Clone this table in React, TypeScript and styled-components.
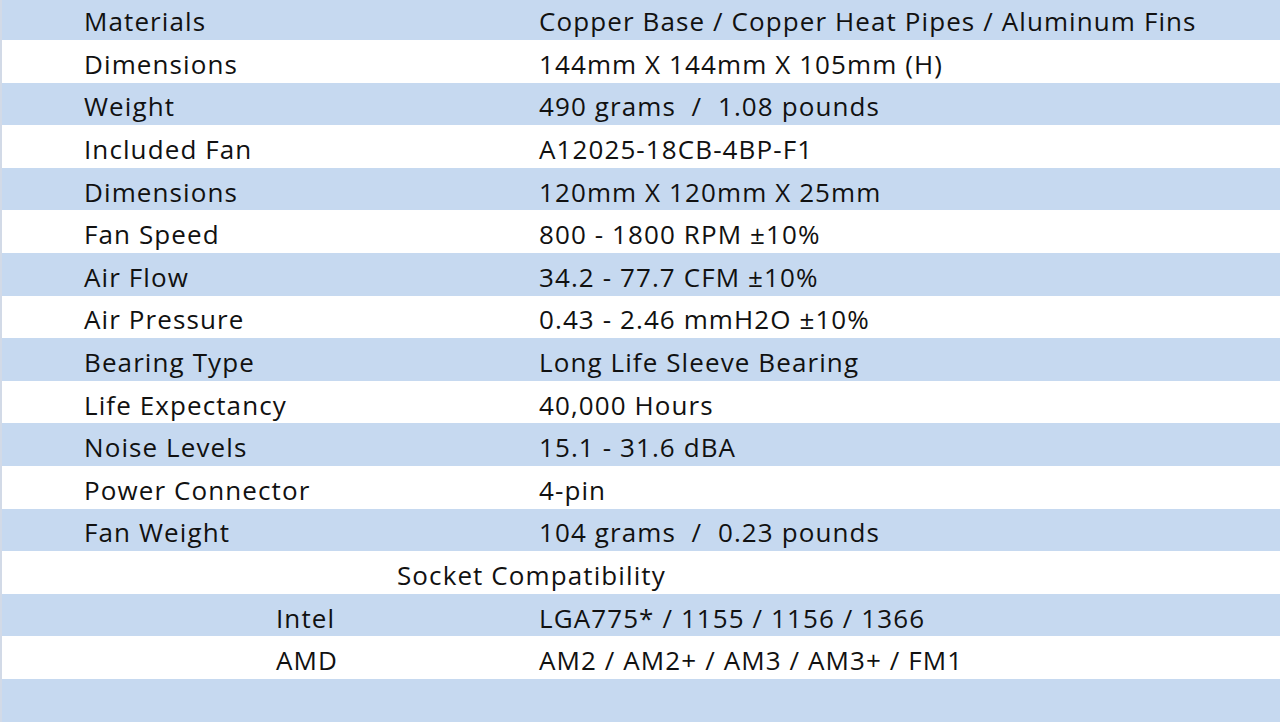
import styled, { createGlobalStyle } from 'styled-components';

const GlobalStyle = createGlobalStyle`
  html, body {
    margin: 0;
    padding: 0;
    background: #c6d9f0;
    overflow: hidden;
  }
`;

type Spec = { label: string; value: string };

const specs: Spec[] = [
  { label: 'Materials', value: 'Copper Base / Copper Heat Pipes / Aluminum Fins' },
  { label: 'Dimensions', value: '144mm X 144mm X 105mm (H)' },
  { label: 'Weight', value: '490 grams  /  1.08 pounds' },
  { label: 'Included Fan', value: 'A12025-18CB-4BP-F1' },
  { label: 'Dimensions', value: '120mm X 120mm X 25mm' },
  { label: 'Fan Speed', value: '800 - 1800 RPM ±10%' },
  { label: 'Air Flow', value: '34.2 - 77.7 CFM ±10%' },
  { label: 'Air Pressure', value: '0.43 - 2.46 mmH2O ±10%' },
  { label: 'Bearing Type', value: 'Long Life Sleeve Bearing' },
  { label: 'Life Expectancy', value: '40,000 Hours' },
  { label: 'Noise Levels', value: '15.1 - 31.6 dBA' },
  { label: 'Power Connector', value: '4-pin' },
  { label: 'Fan Weight', value: '104 grams  /  0.23 pounds' },
];

const sockets: Spec[] = [
  { label: 'Intel', value: 'LGA775* / 1155 / 1156 / 1366' },
  { label: 'AMD', value: 'AM2 / AM2+ / AM3 / AM3+ / FM1' },
];

export default function App() {
  // striping continues through the socket rows, so keep a running index
  let i = 0;
  return (
    <>
      <GlobalStyle />
      <Table>
        {specs.map((s) => (
          <Row key={`${s.label}-${i}`} $shaded={i++ % 2 === 0}>
            <Label>{s.label}</Label>
            <Value>{s.value}</Value>
          </Row>
        ))}
        <Row $shaded={i++ % 2 === 0}>
          <SectionTitle>Socket Compatibility</SectionTitle>
        </Row>
        {sockets.map((s) => (
          <Row key={s.label} $shaded={i++ % 2 === 0}>
            <SubLabel>{s.label}</SubLabel>
            <Value>{s.value}</Value>
          </Row>
        ))}
        <Row $shaded={i++ % 2 === 0} />
      </Table>
    </>
  );
}

const Table = styled.div`
  display: flex;
  flex-direction: column;
  margin-top: -2.6px;
  border-left: 2px solid #d2dae7;
  font-family: 'Open Sans', Lato, sans-serif;
  font-size: 26px;
  letter-spacing: 1.1px;
  color: #111;
`;

const Row = styled.div<{ $shaded: boolean }>`
  display: grid;
  grid-template-columns: 537px 1fr;
  align-items: center;
  height: 42.6px;
  padding-top: 5px;
  box-sizing: border-box;
  background: ${(p) => (p.$shaded ? '#c6d9f0' : '#ffffff')};
  white-space: pre;
`;

const Label = styled.div`
  padding-left: 82px;
`;

const SubLabel = styled.div`
  padding-left: 274px;
`;

const Value = styled.div``;

const SectionTitle = styled.div`
  grid-column: 1 / -1;
  padding-left: 395px;
`;
